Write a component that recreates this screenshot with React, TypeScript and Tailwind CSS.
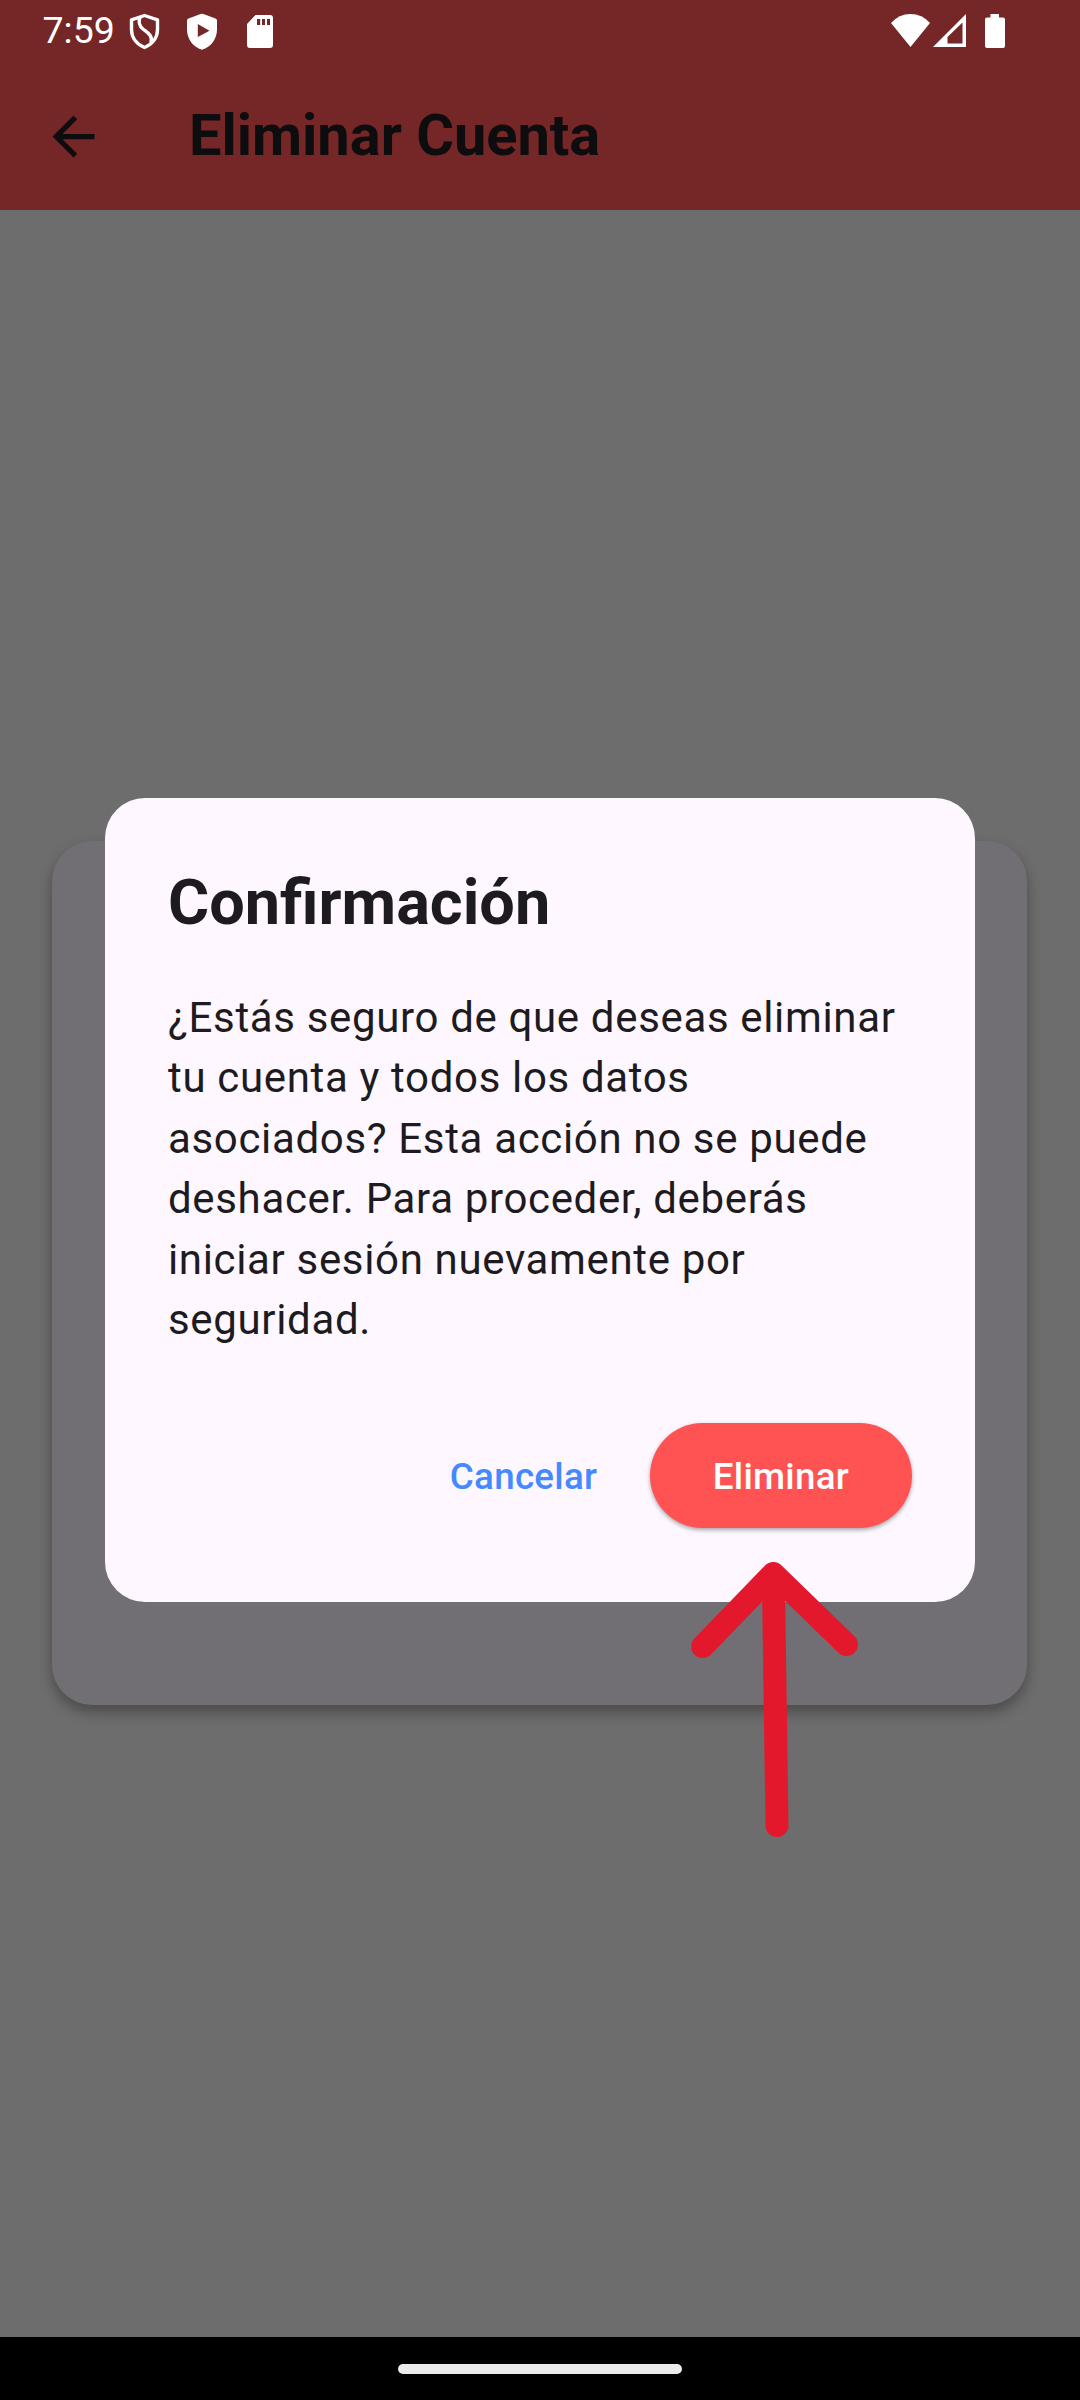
import React from "react";

function StatusBar() {
  return (
    <div className="flex h-[63px] items-start justify-between text-white">
      <div className="flex items-start">
        <span className="ml-[42.5px] mt-[9px] w-[74px] text-[37.5px] leading-[43px]">7:59</span>
        <svg className="ml-[11px] mt-[11px]" width="34" height="40" viewBox="0 0 34 40" fill="none" stroke="white" strokeWidth="3.4">
          <path d="M16.500 4.500 29.500 8.800V18.500C29.500 27 24 33.500 16.500 36.500C9 33.500 3.500 27 3.500 18.500V8.800Z" strokeLinejoin="round" />
          <path d="M12.500 5.500C10 10 11 15 15.500 18.500C20 22 25 24.500 23 32" />
        </svg>
        <svg className="ml-[23.500px] mt-[11px]" width="34" height="40" viewBox="0 0 34 40">
          <path fillRule="evenodd" fill="white" d="M15.600 3Q17 2.300 18.400 3L30.500 7.400Q32 8 32 9.500V18.500C32 28 26 36 17 38.700C8 36 2 28 2 18.500V9.500Q2 8 3.500 7.400ZM12.800 13V26L24.500 19.800Z" />
        </svg>
        <svg className="ml-[26px] mt-[11px]" width="30" height="40" viewBox="0 0 30 40">
          <path fillRule="evenodd" fill="white" d="M10.500 4H25Q28 4 28 7V34Q28 37 25 37H5Q2 37 2 34V13ZM12 8V14H15.200V8ZM17 8V14H20V8ZM22 8V14H25V8Z" />
        </svg>
      </div>
      <div className="mr-[73px] mt-[11px] flex">
        <svg width="42" height="38" viewBox="0 0 42 38">
          <path fill="white" d="M2 12Q10 3 21.500 3Q33 3 41 12L21.500 36Z" />
        </svg>
        <svg width="36" height="38" viewBox="0 0 36 38">
          <path fillRule="evenodd" fill="white" d="M2 36 35 3V36ZM16.500 32.500H31.500V11.500L16.500 26Z" />
        </svg>
        <svg className="ml-[16px]" width="24" height="38" viewBox="0 0 24 38">
          <path fill="white" d="M7.500 3H16V6.500H20Q22 6.500 22 8.500V35Q22 37 20 37H4Q2 37 2 35V8.500Q2 6.500 4 6.500H7.500Z" />
        </svg>
      </div>
    </div>
  );
}

function AppBar() {
  return (
    <header className="h-[210px] bg-[#752626]">
      <StatusBar />
      <div className="flex h-[147px] items-center text-[#0d0c0e]">
        <svg className="ml-[42px]" width="63" height="63" viewBox="0 0 24 24" fill="currentColor">
          <path d="M20 11H7.830l5.590-5.590L12 4l-8 8 8 8 1.410-1.410L7.830 13H20z" />
        </svg>
        <h1 className="mb-[3px] ml-[84px] text-[57.75px] font-bold leading-[74px]">Eliminar Cuenta</h1>
      </div>
    </header>
  );
}

function ConfirmDialog() {
  return (
    <section className="absolute left-[53px] top-[-43px] flex h-[804px] w-[870px] flex-col rounded-[40px] bg-[#fef7ff] px-[63px] pt-[63px] text-[#1d1b20]">
      <h2 className="text-[63px] font-bold leading-[83px]">Confirmación</h2>
      <p className="mt-[43.900px] whitespace-nowrap text-[42px] leading-[60.4px] tracking-[0.656px]">
        ¿Estás seguro de que deseas eliminar
        <br />
        tu cuenta y todos los datos
        <br />
        asociados? Esta acción no se puede
        <br />
        deshacer. Para proceder, deberás
        <br />
        iniciar sesión nuevamente por
        <br />
        seguridad.
      </p>
      <div className="mt-[72.7px] flex items-center justify-end text-[36.75px] font-medium leading-[52px] tracking-[0.2625px]">
        <button className="mr-[21px] h-[105px] px-[31.5px] pt-[3px] text-[#448aff]">Cancelar</button>
        <button className="h-[105px] rounded-full bg-[#ff5252] px-[63px] pt-[3px] text-white shadow-[0_2px_4px_rgba(0,0,0,0.35)]">Eliminar</button>
      </div>
    </section>
  );
}

export default function App() {
  return (
    <div className="flex h-[2400px] w-[1080px] flex-col overflow-hidden bg-[#6d6d6d] font-['Roboto',sans-serif]">
      <AppBar />
      <main className="flex h-[2127px] justify-center pt-[631px]">
        <div className="relative mr-px h-[864px] w-[975px] rounded-[40px] bg-[#716f73] shadow-[0_7px_14px_rgba(0,0,0,0.32)]">
          <ConfirmDialog />
          <svg className="absolute left-[632px] top-[710px]" width="180" height="290" viewBox="0 0 180 290" fill="none" stroke="#e4182c" strokeWidth="23" strokeLinecap="round" strokeLinejoin="round">
            <path d="M18.700 95.500 89.300 22.500 162.500 93.500M89.300 22.500 93 274.500" />
          </svg>
        </div>
      </main>
      <footer className="flex h-[63px] items-start justify-center bg-black">
        <div className="mt-[27px] h-[10px] w-[284px] rounded-full bg-[#ebebeb]" />
      </footer>
    </div>
  );
}
